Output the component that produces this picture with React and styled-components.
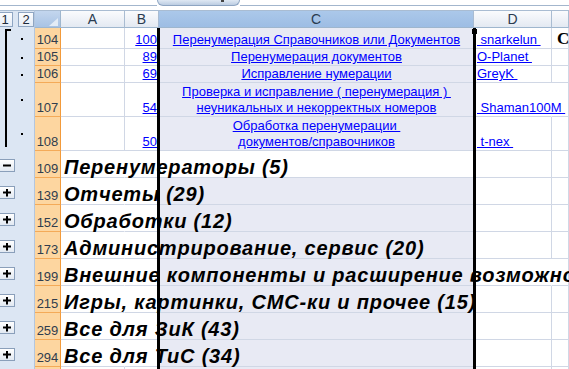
import React from "react";
import styled, { createGlobalStyle } from "styled-components";

const GRID = "#d0d7e5";
const TINT = "#e8eaf4";

const GlobalStyle = createGlobalStyle`
  html, body { margin: 0; padding: 0; background: #fff; overflow: hidden; }
  body { font-family: "Liberation Sans", Arial, sans-serif; }
`;

const Page = styled.div`
  width: 569px;
  height: 369px;
  overflow: hidden;
  background: #fff;
`;

const TopStrip = styled.div`
  height: 10px;
  display: flex;
  align-items: flex-start;
`;

const NameArea = styled.div`
  width: 157px;
  height: 5px;
  border-bottom: 1px solid #a3b6cd;
  overflow: hidden;
`;

const NameText = styled.div`
  margin: -11px 0 0 57px;
  font: bold 11px/14px "Liberation Sans", Arial, sans-serif;
  color: #111;
`;

const ExpandTab = styled.div`
  width: 83px;
  height: 6px;
  box-sizing: border-box;
  border: 1px solid #8ea5c2;
  border-top: none;
  border-radius: 0 0 9px 9px;
  background: linear-gradient(#dfe8f3, #bccde2);
  display: flex;
  justify-content: flex-end;
  padding-right: 15px;
`;

const Chevron = styled.div`
  width: 3px;
  height: 2px;
  background: #444;
`;

const RestLine = styled.div`
  flex: 1;
  height: 5px;
  border-bottom: 1px solid #a3b6cd;
`;

const Sheet = styled.div`
  position: relative;
  display: grid;
  grid-template-columns: 35px 26px 64px 34px 315px 78px 1fr;
  grid-template-rows: 18px 21px 17px 17px 34px 34px repeat(9, 27px);
`;

const OutlineHead = styled.div`
  background: #dce6f3;
  border-top: 1px solid #a9bcd2;
  border-right: 1px solid #b3c6de;
  display: flex;
  align-items: center;
  gap: 5px;
  margin-left: -3px;
`;

const LevelButton = styled.div`
  width: 16px;
  height: 15px;
  box-sizing: border-box;
  border: 1px solid #8fa6c3;
  background: linear-gradient(#fbfcfe, #e6edf6);
  font-size: 13px;
  line-height: 13px;
  color: #1d2a3a;
  display: flex;
  align-items: center;
  justify-content: center;
`;

const Corner = styled.div`
  background: linear-gradient(#c3d6ee, #a9c3e4);
  border-top: 1px solid #a9bcd2;
  border-right: 1px solid #9eb6ce;
  border-bottom: 1px solid #9eb6ce;
  display: flex;
  align-items: flex-end;
  justify-content: flex-end;
  padding: 0 2px 1px 0;
`;

const ColHead = styled.div`
  background: ${(p) =>
    p.$selected ? "linear-gradient(#abc8ea, #9dbde4)" : "linear-gradient(#fafbfd, #e3e9f2)"};
  border-top: 1px solid #a9bcd2;
  border-right: 1px solid #a9bcd2;
  border-bottom: 1px solid #9eb6ce;
  color: #2a3b4f;
  font-size: 14px;
  display: flex;
  align-items: center;
  justify-content: center;
`;

const OutlineCell = styled.div`
  position: relative;
  background: #dce6f3;
  border-right: 1px solid #b3c6de;
  display: flex;
  align-items: center;

  &::before {
    content: "";
    display: ${(p) => (p.$bar ? "block" : "none")};
    position: absolute;
    left: 5px;
    width: 2px;
    top: ${(p) => (p.$bar === "first" ? "1px" : "0")};
    bottom: ${(p) => (p.$bar === "last" ? "4px" : "0")};
    background: #000;
  }
  &::after {
    content: "";
    display: ${(p) => (p.$bar === "first" ? "block" : "none")};
    position: absolute;
    left: 5px;
    top: 1px;
    width: 6px;
    height: 2px;
    background: #000;
  }
`;

const Dot = styled.div`
  width: 2px;
  height: 2px;
  background: #000;
  margin-left: 21px;
`;

const ToggleBox = styled.div`
  width: 16px;
  height: 13px;
  box-sizing: border-box;
  margin: 2px 0 0 -1px;
  border: 1px solid #8a9fba;
  background: linear-gradient(#ffffff, #e2e9f2);
  display: flex;
`;

const RowHead = styled.div`
  background: #fdd6a0;
  border-right: 1px solid #f29a3a;
  border-bottom: 1px solid #f4aa58;
  color: #303d4e;
  font-size: 13px;
  line-height: 15px;
  display: flex;
  align-items: flex-end;
  justify-content: center;
  padding-bottom: 1px;
`;

const Cell = styled.div`
  min-width: 0;
  background: ${(p) => (p.$tint ? TINT : "#fff")};
  border-right: 1px solid ${(p) => (p.$noRight ? "transparent" : GRID)};
  border-bottom: 1px solid ${GRID};
  display: flex;
  align-items: flex-end;
  justify-content: ${(p) =>
    p.$align === "center" ? "center" : p.$align === "right" ? "flex-end" : "flex-start"};
  padding: 0 ${(p) => (p.$align === "right" ? "1px" : "2px")} 0 3px;
  font-size: 13px;
  line-height: 16px;
`;

const Link = styled.span`
  position: relative;
  z-index: 1;
  color: #0000ff;
  text-decoration: underline;
  text-underline-offset: 1px;
  white-space: pre;
  text-align: center;
`;

const SerifMark = styled.span`
  font: bold 17px/18px "Liberation Serif", "Times New Roman", serif;
  color: #000;
  padding-left: 2px;
`;

const Title = styled.span`
  position: relative;
  z-index: 2;
  white-space: nowrap;
  font: italic bold 20px/20px "Liberation Sans", Arial, sans-serif;
  letter-spacing: 0.8px;
  color: #000;
`;

const SelectionFrame = styled.div`
  position: absolute;
  z-index: 3;
  pointer-events: none;
  top: 18px;
  bottom: 0;
  left: 157px;
  width: 319px;
  box-sizing: border-box;
  border-left: 3px solid #000;
  border-right: 3px solid #000;

  &::after {
    content: "";
    position: absolute;
    right: -4px;
    top: 1px;
    width: 5px;
    height: 5px;
    background: #000;
  }
`;

const CornerTriangle = () => (
  <svg width="9" height="8" viewBox="0 0 9 8">
    <polygon points="9,0 9,8 0,8" fill="#e3ecf7" />
  </svg>
);

const ToggleIcon = ({ open }) => (
  <svg width="14" height="11" viewBox="0 0 14 11">
    <rect x="3" y="4.5" width="8" height="2" fill="#000" />
    {!open && <rect x="6" y="2" width="2" height="7.5" fill="#000" />}
  </svg>
);

const detailRows = [
  { n: 104, b: "100", c: "Перенумерация Справочников или Документов", d: " snarkelun ", e: "С", bar: "first" },
  { n: 105, b: "89", c: "Перенумерация документов", d: "O-Planet ", bar: "mid" },
  { n: 106, b: "69", c: "Исправление нумерации", d: "GreyK ", bar: "mid" },
  {
    n: 107,
    b: "54",
    c: "Проверка и исправление ( перенумерация ) \nнеуникальных и некорректных номеров",
    d: " Shaman100M ",
    dOverflow: true,
    bar: "mid",
  },
  { n: 108, b: "50", c: "Обработка перенумерации \nдокументов/справочников", d: " t-nex ", bar: "last" },
];

const groupRows = [
  { n: 109, t: "Перенумераторы (5)", open: true, active: true },
  { n: 139, t: "Отчеты (29)" },
  { n: 152, t: "Обработки (12)" },
  { n: 173, t: "Администрирование, сервис (20)" },
  { n: 199, t: "Внешние компоненты и расширение возможностей (17)", wide: true },
  { n: 215, t: "Игры, картинки, СМС-ки и прочее (15)" },
  { n: 259, t: "Все для ЗиК (43)" },
  { n: 294, t: "Все для ТиС (34)" },
  { n: null, t: "", empty: true },
];

export default function App() {
  return (
    <Page>
      <GlobalStyle />
      <TopStrip>
        <NameArea>
          <NameText>C109</NameText>
        </NameArea>
        <ExpandTab>
          <Chevron />
        </ExpandTab>
        <RestLine />
      </TopStrip>
      <Sheet>
        <OutlineHead>
          <LevelButton>1</LevelButton>
          <LevelButton>2</LevelButton>
        </OutlineHead>
        <Corner>
          <CornerTriangle />
        </Corner>
        <ColHead>A</ColHead>
        <ColHead>B</ColHead>
        <ColHead $selected>C</ColHead>
        <ColHead>D</ColHead>
        <ColHead />

        {detailRows.map((r) => (
          <React.Fragment key={r.n}>
            <OutlineCell $bar={r.bar}>
              <Dot />
            </OutlineCell>
            <RowHead>{r.n}</RowHead>
            <Cell />
            <Cell $align="right">
              <Link>{r.b}</Link>
            </Cell>
            <Cell $align="center" $tint>
              <Link>{r.c}</Link>
            </Cell>
            <Cell $noRight={r.dOverflow}>
              <Link>{r.d}</Link>
            </Cell>
            <Cell>{r.e && <SerifMark>{r.e}</SerifMark>}</Cell>
          </React.Fragment>
        ))}

        {groupRows.map((r, i) => (
          <React.Fragment key={i}>
            <OutlineCell>
              {!r.empty && (
                <ToggleBox>
                  <ToggleIcon open={r.open} />
                </ToggleBox>
              )}
            </OutlineCell>
            <RowHead>{r.n}</RowHead>
            <Cell $noRight={!r.empty}>
              {r.t && <Title>{r.t}</Title>}
            </Cell>
            <Cell $noRight={!r.empty} />
            <Cell $tint={!r.active} />
            <Cell $noRight={r.wide} />
            <Cell />
          </React.Fragment>
        ))}

        <SelectionFrame />
      </Sheet>
    </Page>
  );
}
